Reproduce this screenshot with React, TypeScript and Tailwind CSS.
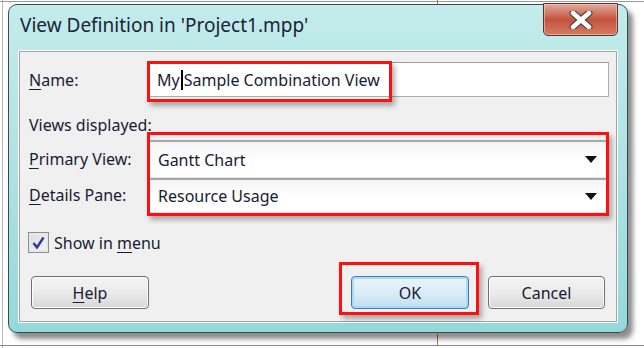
import React from "react";

const font = { fontFamily: '"Noto Sans", "Open Sans", sans-serif' };

function U({ children }: { children: React.ReactNode }) {
  return <span className="underline underline-offset-[3px] decoration-1">{children}</span>;
}

function ComboBox({ value, tall }: { value: string; tall?: boolean }) {
  return (
    <div
      className={`flex items-center justify-between border-t-2 border-t-[#a8a8a8] border-b border-b-[#e2e2e2] bg-gradient-to-b from-[#f4f4f4] via-white to-white pl-[10px] pr-[12px] ${
        tall ? "h-[38px]" : "h-[35px]"
      }`}
    >
      <span>{value}</span>
      <svg width="12" height="7" viewBox="0 0 12 7">
        <path d="M0 0 L12 0 L6 7 Z" fill="#111" />
      </svg>
    </div>
  );
}

function Button({ children, primary }: { children: React.ReactNode; primary?: boolean }) {
  return (
    <button
      className={`flex h-[33px] w-full items-center justify-center rounded-[4px] border ${
        primary
          ? "border-[#3c7fb1] bg-gradient-to-b from-[#e8f5fc] via-[#dcedf8] to-[#bfdff2] shadow-[inset_0_0_0_2px_#a9dcf3]"
          : "border-[#707070] bg-gradient-to-b from-[#f4f4f4] via-[#ebebeb] to-[#d8d8d8] shadow-[inset_0_0_0_1px_#fcfcfc]"
      }`}
    >
      {children}
    </button>
  );
}

export default function App() {
  return (
    <div
      className="relative h-[348px] w-[644px] overflow-hidden bg-white text-[16px] text-[#181b33]"
      style={font}
    >
      {/* spreadsheet behind the dialog */}
      <div className="absolute left-[2px] top-0 h-full w-px bg-[#b8b8b8]" />
      <div className="absolute left-0 top-[1px] h-px w-full bg-[#9a9a9a]" />
      <div className="absolute left-0 top-[345px] h-px w-full bg-[#8a8a8a]" />
      <div className="absolute left-[437px] top-0 h-[5px] w-px bg-[#b07040]" />
      <div className="absolute left-[437px] top-[334px] h-[11px] w-px bg-[#b07040]" />

      {/* dialog frame */}
      <div className="relative ml-[8px] mt-[4px] flex h-[329px] w-[620px] flex-col rounded-[9px] border border-[#3b4a4c] bg-gradient-to-b from-[#c3ecec] via-[#b0e2e3] to-[#94d9da] shadow-[5px_6px_5px_rgba(0,0,0,0.45)]">
        <div className="flex h-[45px] shrink-0 items-center pb-[4px] pl-[11px] text-[19px] text-[#1b2336]">
          View Definition in 'Project1.mpp'
        </div>

        {/* close button */}
        <div className="absolute right-[9px] top-[-2px] flex h-[33px] w-[75px] items-center justify-center rounded-b-[5px] border border-[#5c3229] bg-gradient-to-b from-[#e0aa9c] via-[#c4533e] to-[#d47a62] shadow-[inset_0_0_0_1px_rgba(255,220,210,0.5)]">
          <svg width="24" height="18" viewBox="0 0 24 18">
            <path
              d="M4 2 L20 16 M20 2 L4 16"
              stroke="#4a4a4a"
              strokeWidth="7"
              strokeLinecap="round"
            />
            <path
              d="M4 2 L20 16 M20 2 L4 16"
              stroke="#ffffff"
              strokeWidth="4.5"
              strokeLinecap="round"
            />
          </svg>
        </div>

        {/* client area */}
        <div className="relative mx-[9px] mb-[9px] flex-1 border border-[#ffffff] bg-[#f0f0f0] shadow-[inset_0_0_0_1px_#9fa8a8]">
          <div className="mt-[11px] flex h-[35px] items-center">
            <div className="w-[129px] pl-[10px]">
              <U>N</U>ame:
            </div>
            <div className="flex h-[35px] w-[461px] items-center border border-[#adadad] border-t-[#9c9c9c] bg-white pl-[8px]">
              My<span className="mx-[1px] inline-block h-[20px] w-[2px] bg-black" />Sample Combination View
            </div>
          </div>

          <div className="mt-[17px] flex h-[22px] items-center pl-[10px]">Views displayed:</div>

          <div className="mt-[4px] flex">
            <div className="flex w-[129px] flex-col pl-[10px]">
              <div className="flex h-[37px] items-center">
                <span>
                  <U>P</U>rimary View:
                </span>
              </div>
              <div className="flex h-[35px] items-center">
                <span>
                  <U>D</U>etails Pane:
                </span>
              </div>
            </div>
            <div className="flex w-[461px] flex-col">
              <ComboBox value="Gantt Chart" tall />
              <ComboBox value="Resource Usage" />
            </div>
          </div>

          <div className="mt-[19px] flex h-[21px] items-center gap-[5px] pl-[9px]">
            <div className="flex h-[21px] w-[21px] items-center justify-center border border-[#8e8f8f] bg-gradient-to-br from-[#dcdcdc] to-[#f6f6f6] shadow-[inset_0_0_0_2px_#e8e8e8]">
              <svg width="13" height="13" viewBox="0 0 13 13">
                <path d="M1.5 7 L5 11.5 L11.5 1.5" fill="none" stroke="#2b3b9c" strokeWidth="2.4" />
              </svg>
            </div>
            <span>
              Show in <U>m</U>enu
            </span>
          </div>

          <div className="mt-[23px] flex">
            <div className="ml-[12px] w-[118px]">
              <Button>
                <span>
                  <U>H</U>elp
                </span>
              </Button>
            </div>
            <div className="ml-[202px] w-[118px]">
              <Button primary>OK</Button>
            </div>
            <div className="ml-[19px] w-[117px]">
              <Button>Cancel</Button>
            </div>
          </div>

          {/* red highlight boxes */}
          <div className="pointer-events-none absolute left-[128px] top-[10px] h-[41px] w-[245px] border-[3px] border-[#ff1010] shadow-[3px_4px_5px_rgba(0,0,0,0.3)]" />
          <div className="pointer-events-none absolute left-[128px] top-[81px] h-[84px] w-[462px] border-[3px] border-[#ff1010] shadow-[3px_4px_5px_rgba(0,0,0,0.3)]" />
          <div className="pointer-events-none absolute left-[320px] top-[211px] h-[53px] w-[140px] border-[3px] border-[#ff1010] shadow-[3px_4px_5px_rgba(0,0,0,0.3)]" />
        </div>
      </div>
    </div>
  );
}
